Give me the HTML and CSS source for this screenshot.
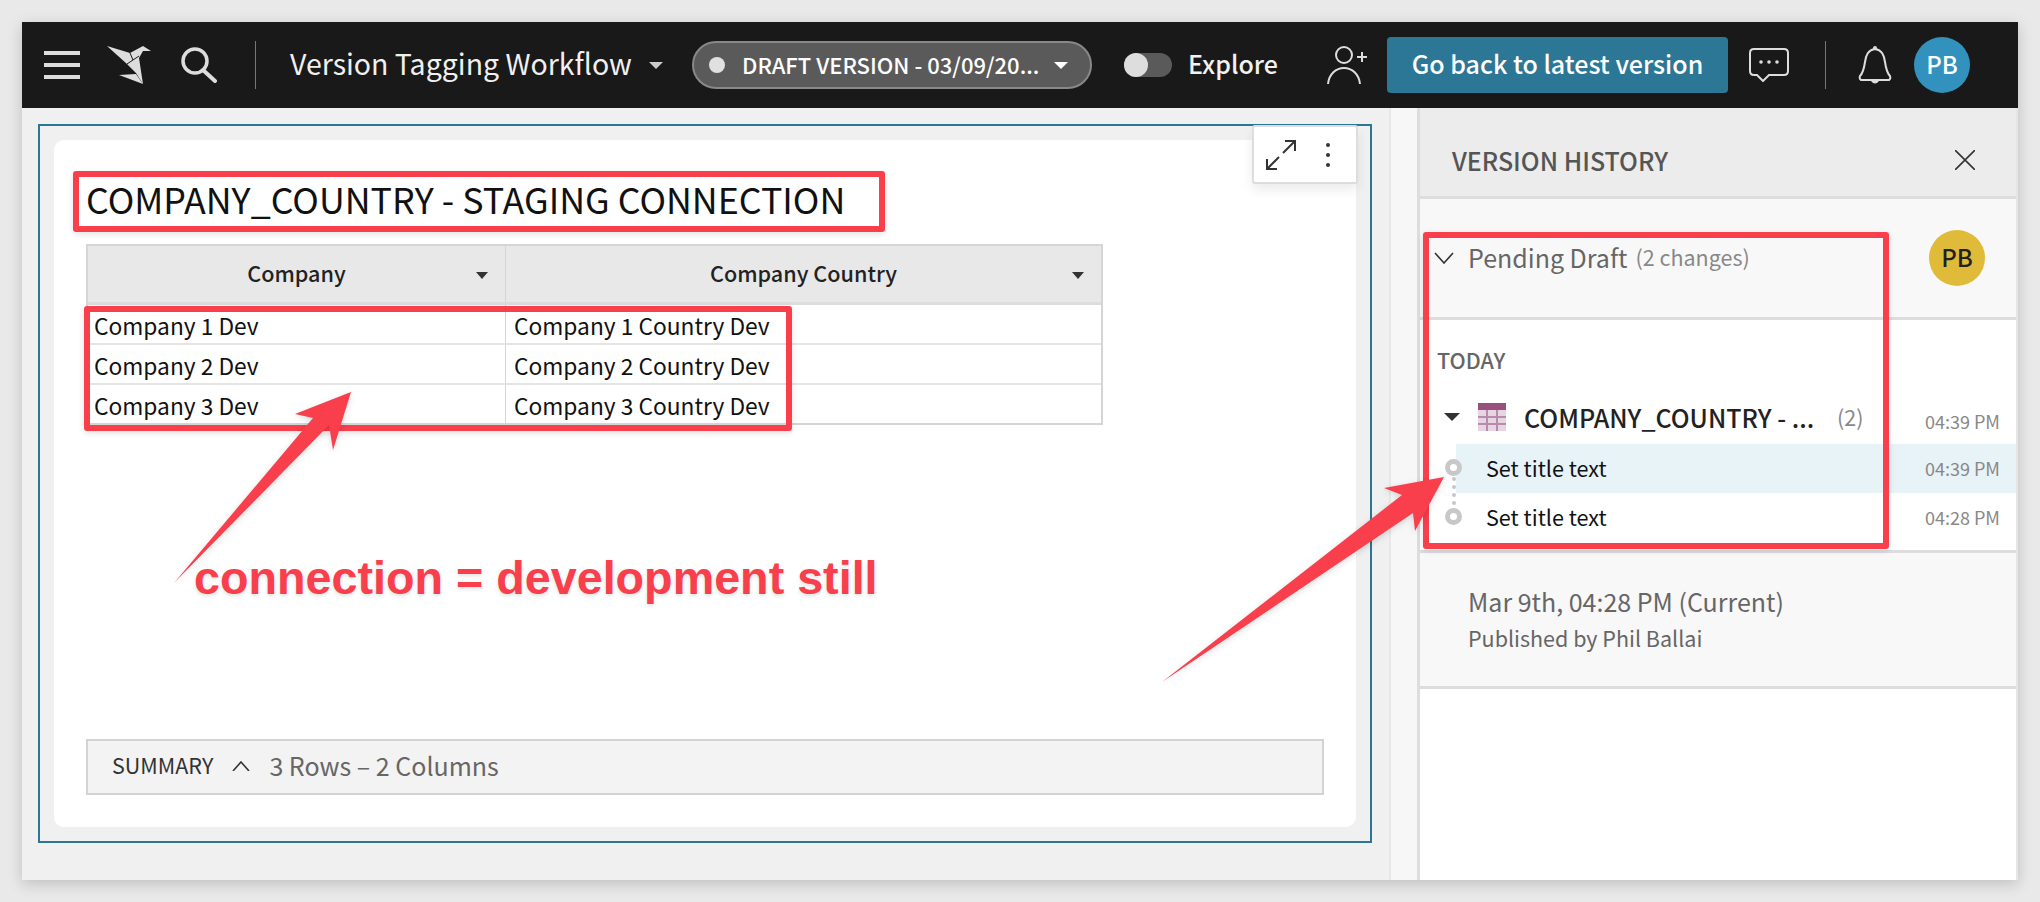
FILE: index.html
```html
<!DOCTYPE html>
<html>
<head>
<meta charset="utf-8">
<title>Version Tagging Workflow</title>
<link rel="stylesheet" href="styles.css">
</head>
<body>
<div class="window">
    <header class="topbar">
        <div class="menu-icon"><span></span><span></span><span></span></div>
        <svg class="logo" width="46" height="40" viewBox="0 0 46 40">
            <path fill="#ddd" d="M1 1 L24 8 L37 1 L45 6 L37 6 L33 13 L37 39 L30 28 L21 19 Z"/>
            <path fill="#ddd" d="M13 30 L30 29 L37 39 Z"/>
            <path fill="none" stroke="#191919" stroke-width="1" d="M21 19 L33 11 M24 8 L27 15"/>
        </svg>
        <svg class="search" width="38" height="36" viewBox="0 0 38 36">
            <circle cx="15" cy="14" r="12" fill="none" stroke="#ddd" stroke-width="3.5"/>
            <path d="M23 23 L35 34" stroke="#ddd" stroke-width="4" stroke-linecap="round"/>
        </svg>
        <div class="divider"></div>
        <div class="doc-title">Version Tagging Workflow</div>
        <div class="caret caret-title"></div>
        <div class="draft-pill">
            <span class="dot"></span>
            <span class="draft-text">DRAFT VERSION - 03/09/20...</span>
            <span class="caret caret-white"></span>
        </div>
        <div class="toggle"><span class="knob"></span></div>
        <div class="explore">Explore</div>
        <svg class="add-user" width="40" height="38" viewBox="0 0 40 38">
            <circle cx="17" cy="9" r="8" fill="none" stroke="#ddd" stroke-width="2"/>
            <path d="M1 38 C2 28 9 22 17 22 C25 22 32 28 33 38" fill="none" stroke="#ddd" stroke-width="2"/>
            <path d="M30 11 H40 M35 6 V16" stroke="#ddd" stroke-width="2"/>
        </svg>
        <div class="latest-btn">Go back to latest version</div>
        <svg class="comment" width="40" height="34" viewBox="0 0 40 34">
            <path d="M5 1 H35 Q39 1 39 5 V23 Q39 27 35 27 H20 L14 33 L8 27 H5 Q1 27 1 23 V5 Q1 1 5 1 Z" fill="none" stroke="#ddd" stroke-width="2"/>
            <circle cx="12" cy="14" r="1.8" fill="#ddd"/>
            <circle cx="20" cy="14" r="1.8" fill="#ddd"/>
            <circle cx="28" cy="14" r="1.8" fill="#ddd"/>
        </svg>
        <div class="divider divider-right"></div>
        <svg class="bell" width="34" height="40" viewBox="0 0 34 40">
            <path d="M17 4 C10 5 8 10 7 17 C6 24 5 28 2 31 Q1 34 3 35 H31 Q33 34 32 31 C29 28 28 24 27 17 C26 10 24 5 17 4 Z" fill="none" stroke="#ddd" stroke-width="2"/>
            <circle cx="17" cy="3" r="2" fill="#ddd"/>
            <path d="M13 36 Q17 41 21 36 Z" fill="#ddd"/>
        </svg>
        <div class="avatar avatar-blue">PB</div>
    </header>

    <div class="content">
        <main class="canvas">
            <div class="frame">
                <div class="card">
                    <div class="card-tools">
                        <svg width="30" height="30" viewBox="0 0 30 30">
                            <path d="M17 13 L29 1 M19 1 H29 V11 M13 17 L1 29 M11 29 H1 V19" fill="none" stroke="#333" stroke-width="2"/>
                        </svg>
                        <div class="kebab"><span></span><span></span><span></span></div>
                    </div>
                    <h1 class="card-title">COMPANY_COUNTRY - STAGING CONNECTION</h1>
                    <div class="grid-table">
                        <div class="grid-head">
                            <div class="head-cell col-a">Company<span class="caret caret-dark"></span></div>
                            <div class="head-cell col-b">Company Country<span class="caret caret-dark"></span></div>
                        </div>
                        <div class="grid-row"><div class="cell col-a">Company 1 Dev</div><div class="cell col-b">Company 1 Country Dev</div></div>
                        <div class="grid-row"><div class="cell col-a">Company 2 Dev</div><div class="cell col-b">Company 2 Country Dev</div></div>
                        <div class="grid-row"><div class="cell col-a">Company 3 Dev</div><div class="cell col-b">Company 3 Country Dev</div></div>
                    </div>
                    <div class="summary">
                        <span class="summary-label">SUMMARY</span>
                        <svg width="18" height="10" viewBox="0 0 18 10"><path d="M1 10 L9 1 L17 10" fill="none" stroke="#333" stroke-width="1.6"/></svg>
                        <span class="summary-count">3 Rows – 2 Columns</span>
                    </div>
                </div>
            </div>
        </main>
        <div class="strip"></div>
        <aside class="panel">
            <div class="panel-head">
                <span>VERSION HISTORY</span>
                <svg width="20" height="20" viewBox="0 0 20 20"><path d="M0 0 L20 20 M20 0 L0 20" stroke="#333" stroke-width="1.6"/></svg>
            </div>
            <div class="pending">
                <svg width="20" height="12" viewBox="0 0 20 12"><path d="M1 1 L10 11 L19 1" fill="none" stroke="#333" stroke-width="1.6"/></svg>
                <span class="pending-name">Pending Draft</span>
                <span class="pending-count">(2 changes)</span>
                <div class="avatar avatar-gold">PB</div>
            </div>
            <div class="history">
                <div class="today">TODAY</div>
                <div class="item-row">
                    <span class="caret caret-item"></span>
                    <svg class="table-icon" width="28" height="28" viewBox="0 0 28 28">
                        <rect width="28" height="28" fill="#e6d6e2"/>
                        <rect width="28" height="7" fill="#97517f"/>
                        <path d="M0 14 H28 M0 21 H28 M9 7 V28 M19 7 V28" stroke="#b98aab" stroke-width="2"/>
                    </svg>
                    <span class="item-name">COMPANY_COUNTRY - ...</span>
                    <span class="item-count">(2)</span>
                    <span class="time time-item">04:39 PM</span>
                </div>
                <div class="change-row active">
                    <span class="ring"></span>
                    <span class="change-name">Set title text</span>
                    <span class="time">04:39 PM</span>
                </div>
                <div class="change-row">
                    <span class="ring"></span>
                    <span class="change-name">Set title text</span>
                    <span class="time">04:28 PM</span>
                </div>
                <div class="dots"><span></span><span></span><span></span><span></span></div>
            </div>
            <div class="current">
                <div class="current-name">Mar 9th, 04:28 PM (Current)</div>
                <div class="current-by">Published by Phil Ballai</div>
            </div>
        </aside>
    </div>
</div>

<!-- red markup drawn on top of the screenshot -->
<div class="mark mark-title"></div>
<div class="mark mark-rows"></div>
<div class="mark mark-history"></div>
<svg class="arrows" width="2040" height="902" viewBox="0 0 2040 902">
    <path class="arrow" d="M174 583 L313 418 L295 414 L351 392 L333 450 L329 425 Z"/>
    <path class="arrow" d="M1162 682 L1402 495 L1384 488 L1444 477 L1415 531 L1413 513 Z"/>
</svg>
<div class="note">connection = development still</div>
</body>
</html>
```

FILE: styles.css
```css
* {
  box-sizing: border-box;
}

body {
  margin: 0;
  height: 902px;
  overflow: hidden;
  background-color: #e9e9e9;
  font-family: "Noto Sans CJK SC", "Noto Sans", sans-serif;
  position: relative;
}

.window {
  position: absolute;
  left: 22px;
  top: 22px;
  width: 1996px;
  height: 858px;
  display: flex;
  flex-direction: column;
  box-shadow: 0 4px 14px rgba(0, 0, 0, 0.18);
  background-color: #f0f0f0;
}

/* top bar */
.topbar {
  height: 86px;
  flex: none;
  background-color: #191919;
  display: flex;
  align-items: center;
  color: #fff;
}

.menu-icon {
  margin-left: 22px;
  width: 36px;
  display: flex;
  flex-direction: column;
  gap: 8px;
}

.menu-icon span {
  height: 4px;
  background-color: #ddd;
}

.logo {
  margin-left: 26px;
  flex: none;
}

.search {
  margin-left: 28px;
  flex: none;
}

.divider {
  width: 1px;
  height: 48px;
  margin-left: 37px;
  background-color: #777;
}

.doc-title {
  margin-left: 34px;
  width: 343px;
  padding-bottom: 4px;
  font-size: 28.5px;
  line-height: 40px;
  color: #f0f0f0;
  white-space: nowrap;
}

.caret {
  display: inline-block;
  width: 0;
  height: 0;
  border-left: 7px solid transparent;
  border-right: 7px solid transparent;
  border-top: 7px solid #ccc;
}

.caret-title {
  margin-left: 16px;
}

.draft-pill {
  margin-left: 29px;
  width: 400px;
  height: 48px;
  flex: none;
  display: flex;
  align-items: center;
  padding-left: 15px;
  background-color: #5a5a5a;
  border: 2px solid #888;
  border-radius: 24px;
}

.dot {
  width: 16px;
  height: 16px;
  flex: none;
  border-radius: 50%;
  background-color: #e0e0e0;
}

.draft-text {
  margin-left: 17px;
  width: 312px;
  flex: none;
  padding-bottom: 2px;
  font-size: 22px;
  font-weight: 500;
  line-height: 30px;
  white-space: nowrap;
}

.caret-white {
  border-top-color: #fff;
}

.toggle {
  margin-left: 32px;
  width: 48px;
  height: 24px;
  flex: none;
  border-radius: 12px;
  background-color: #5a5a5a;
}

.knob {
  display: block;
  width: 24px;
  height: 24px;
  border-radius: 50%;
  background-color: #ddd;
}

.explore {
  margin-left: 16px;
  width: 88px;
  padding-bottom: 4px;
  font-size: 25px;
  font-weight: 500;
  line-height: 34px;
  color: #f2f2f2;
}

.add-user {
  margin-left: 51px;
  flex: none;
}

.latest-btn {
  margin-left: 20px;
  width: 341px;
  height: 56px;
  flex: none;
  border-radius: 4px;
  background-color: #2c7696;
  font-size: 25px;
  font-weight: 500;
  line-height: 52px;
  text-align: center;
  white-space: nowrap;
}

.comment {
  margin-left: 21px;
  flex: none;
}

.divider-right {
  margin-left: 36px;
}

.bell {
  margin-left: 32px;
  flex: none;
}

.avatar {
  width: 56px;
  height: 56px;
  flex: none;
  border-radius: 50%;
  font-size: 24px;
  font-weight: 500;
  line-height: 54px;
  text-align: center;
}

.avatar-blue {
  margin-left: 22px;
  background-color: #3391bd;
}

/* worksheet area */
.content {
  flex: 1;
  display: flex;
  min-height: 0;
}

.canvas {
  width: 1367px;
  flex: none;
  padding: 16px 0 0 16px;
}

.frame {
  width: 1334px;
  height: 719px;
  border: 2px solid #2c7696;
  padding: 14px;
}

.card {
  position: relative;
  width: 1302px;
  height: 687px;
  background-color: #fff;
  border-radius: 10px;
  padding: 32px 32px 0 32px;
}

.card-tools {
  position: absolute;
  right: -2px;
  top: -15px;
  width: 106px;
  height: 59px;
  display: flex;
  align-items: center;
  gap: 30px;
  padding-left: 12px;
  background-color: #fff;
  border: 2px solid #ddd;
  border-radius: 3px;
  box-shadow: 0 6px 12px rgba(0, 0, 0, 0.08);
}

.kebab {
  display: flex;
  flex-direction: column;
  gap: 6px;
}

.kebab span {
  width: 4px;
  height: 4px;
  border-radius: 50%;
  background-color: #333;
}

.card-title {
  margin: 0;
  height: 72px;
  font-size: 35.8px;
  font-weight: 400;
  line-height: 52px;
  color: #111;
  white-space: nowrap;
}

.grid-table {
  width: 1017px;
  border: 2px solid #d5d5d5;
}

.grid-head {
  height: 59px;
  display: flex;
  background-color: #e8e8e8;
  border-bottom: 3px solid #ddd;
}

.grid-row {
  height: 40px;
  display: flex;
  border-bottom: 2px solid #e4e4e4;
}

.grid-row:last-child {
  height: 38px;
  border-bottom: none;
}

.col-a {
  width: 418px;
  flex: none;
  border-right: 1px solid #d5d5d5;
}

.col-b {
  flex: 1;
}

.head-cell {
  position: relative;
  font-size: 21.6px;
  font-weight: 500;
  line-height: 53px;
  text-align: center;
  color: #222;
}

.caret-dark {
  position: absolute;
  right: 17px;
  top: 26px;
  border-left-width: 6px;
  border-right-width: 6px;
  border-top-color: #333;
}

.cell {
  padding: 3px 0 0 6px;
  font-size: 22.75px;
  line-height: 35px;
  color: #111;
}

.col-b.cell {
  padding-left: 8px;
}

.summary {
  margin-top: 314px;
  width: 1238px;
  height: 56px;
  display: flex;
  align-items: center;
  padding: 0 0 4px 24px;
  background-color: #f3f3f3;
  border: 2px solid #d3d3d3;
}

.summary-label {
  font-size: 21.5px;
  line-height: 30px;
  color: #333;
}

.summary svg {
  margin: 2px 0 0 19px;
}

.summary-count {
  margin-left: 19px;
  font-size: 25px;
  line-height: 36px;
  color: #666;
}

.strip {
  width: 28px;
  flex: none;
  background-color: #f7f7f7;
  border-left: 2px solid #e8e8e8;
}

/* version history panel */
.panel {
  flex: 1;
  display: flex;
  flex-direction: column;
  background-color: #fff;
  border-left: 3px solid #ddd;
  border-right: 2px solid #e6e6e6;
}

.panel-head {
  height: 91px;
  flex: none;
  display: flex;
  align-items: center;
  justify-content: space-between;
  padding: 16px 41px 0 32px;
  background-color: #ececec;
  border-bottom: 3px solid #ddd;
  font-size: 25px;
  font-weight: 500;
  color: #555;
}

.pending {
  height: 121px;
  flex: none;
  display: flex;
  align-items: center;
  padding: 0 31px 0 14px;
  background-color: #f8f8f8;
  border-bottom: 3px solid #ddd;
}

.pending-name {
  margin-left: 14px;
  padding-bottom: 2px;
  font-size: 25px;
  line-height: 36px;
  color: #666;
}

.pending-count {
  margin-left: 8px;
  padding-bottom: 2px;
  font-size: 21.5px;
  line-height: 36px;
  color: #888;
}

.avatar-gold {
  margin-left: auto;
  background-color: #e0bb39;
  color: #222;
}

.history {
  position: relative;
  height: 230px;
  flex: none;
  padding-top: 26px;
}

.today {
  margin-left: 17px;
  font-size: 21.5px;
  font-weight: 500;
  line-height: 28px;
  color: #666;
}

.item-row {
  margin: 22px 0 6px;
  height: 42px;
  display: flex;
  align-items: center;
  padding-left: 24px;
}

.caret-item {
  border-left-width: 8px;
  border-right-width: 8px;
  border-top: 8px solid #333;
}

.table-icon {
  margin-left: 18px;
  flex: none;
}

.item-name {
  margin-left: 18px;
  width: 295px;
  flex: none;
  font-size: 25px;
  font-weight: 500;
  line-height: 36px;
  color: #222;
  white-space: nowrap;
}

.item-count {
  margin-left: 18px;
  font-size: 21.5px;
  line-height: 36px;
  color: #888;
}

.time {
  margin-left: auto;
  padding-right: 16px;
  font-size: 18px;
  line-height: 28px;
  color: #888;
}

.time-item {
  padding-top: 7px;
}

.change-row {
  position: relative;
  margin-left: 36px;
  height: 49px;
  display: flex;
  align-items: center;
  padding: 0 0 2px 30px;
}

.active {
  background-color: #e8f3f8;
}

.ring {
  position: absolute;
  left: -11px;
  top: 15px;
  width: 17px;
  height: 17px;
  border: 5px solid #c8c8c8;
  border-radius: 50%;
  background-color: #fff;
}

.change-name {
  font-size: 21.6px;
  line-height: 32px;
  color: #111;
}

.dots {
  position: absolute;
  left: 32px;
  top: 157px;
  display: flex;
  flex-direction: column;
  gap: 4px;
}

.dots span {
  width: 4px;
  height: 4px;
  border-radius: 50%;
  background-color: #c8c8c8;
}

.current {
  height: 139px;
  flex: none;
  padding: 30px 0 0 48px;
  background-color: #f8f8f8;
  border-top: 3px solid #ddd;
  border-bottom: 3px solid #ddd;
}

.current-name {
  font-size: 25px;
  line-height: 36px;
  color: #666;
}

.current-by {
  font-size: 21.5px;
  line-height: 37px;
  color: #666;
}

/* annotations */
.mark {
  position: absolute;
  border: 6px solid #f93e4c;
  border-radius: 3px;
  box-shadow: 0 2px 6px rgba(0, 0, 0, 0.12);
}

.mark-title {
  left: 73px;
  top: 171px;
  width: 812px;
  height: 61px;
}

.mark-rows {
  left: 84px;
  top: 306px;
  width: 708px;
  height: 125px;
}

.mark-history {
  left: 1423px;
  top: 232px;
  width: 466px;
  height: 317px;
}

.arrows {
  position: absolute;
  left: 0;
  top: 0;
}

.arrow {
  fill: #f93e4c;
  filter: drop-shadow(0 2px 3px rgba(0, 0, 0, 0.15));
}

.note {
  position: absolute;
  left: 194px;
  top: 550px;
  font-family: "Liberation Sans", Arial, sans-serif;
  font-size: 46.7px;
  font-weight: 700;
  line-height: 56px;
  color: #f93e4c;
  white-space: nowrap;
  text-shadow: 0 2px 4px rgba(0, 0, 0, 0.12);
}
```
